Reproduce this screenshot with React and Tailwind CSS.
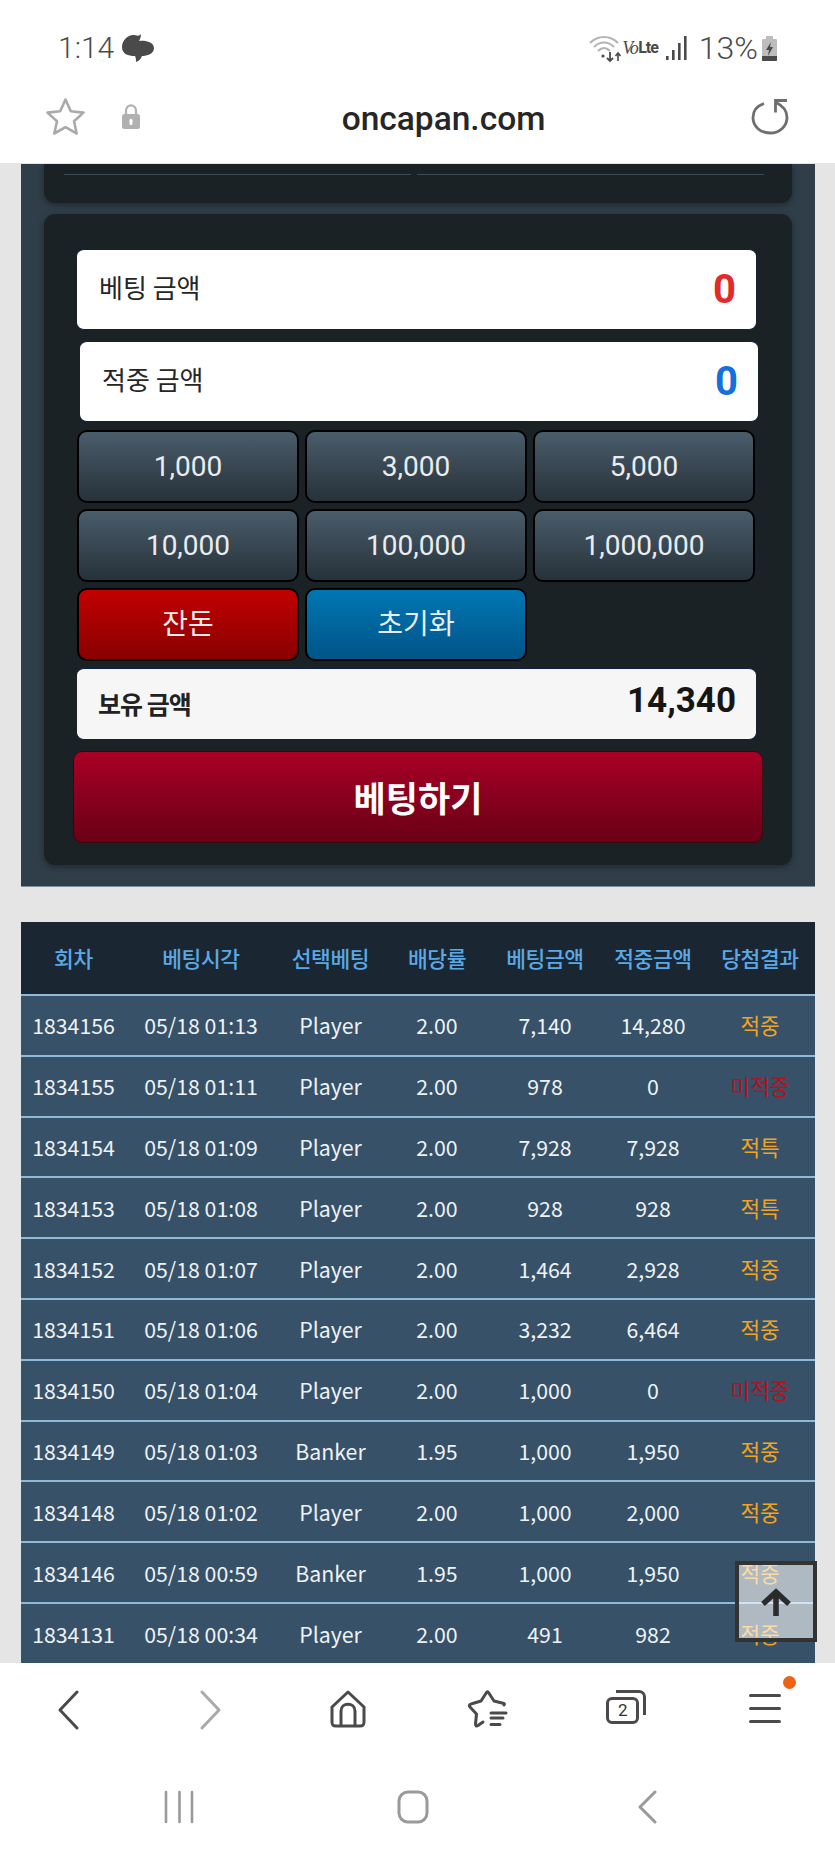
const rows = [
  ["1834156", "05/18 01:13", "Player", "2.00", "7,140", "14,280", "적중"],
  ["1834155", "05/18 01:11", "Player", "2.00", "978", "0", "미적중"],
  ["1834154", "05/18 01:09", "Player", "2.00", "7,928", "7,928", "적특"],
  ["1834153", "05/18 01:08", "Player", "2.00", "928", "928", "적특"],
  ["1834152", "05/18 01:07", "Player", "2.00", "1,464", "2,928", "적중"],
  ["1834151", "05/18 01:06", "Player", "2.00", "3,232", "6,464", "적중"],
  ["1834150", "05/18 01:04", "Player", "2.00", "1,000", "0", "미적중"],
  ["1834149", "05/18 01:03", "Banker", "1.95", "1,000", "1,950", "적중"],
  ["1834148", "05/18 01:02", "Player", "2.00", "1,000", "2,000", "적중"],
  ["1834146", "05/18 00:59", "Banker", "1.95", "1,000", "1,950", "적중"],
  ["1834131", "05/18 00:34", "Player", "2.00", "491", "982", "적중"],
];

const headers = ["회차", "베팅시각", "선택베팅", "배당률", "베팅금액", "적중금액", "당첨결과"];
const amounts = ["1,000", "3,000", "5,000", "10,000", "100,000", "1,000,000"];

const StatusBar = () => (
  <div className="h-[82px] flex items-start justify-between pt-[31px] pl-[58px] pr-[57px] font-['Roboto',sans-serif] font-light text-[#4a4a4a]">
    <div className="flex items-center gap-[8px]">
      <span className="text-[30px] leading-[34px]">1:14</span>
      <svg width="32" height="28" viewBox="0 0 32 28">
        <path d="M19 0 C19 3 18 5 17 7 C23 6 32 8 32 14 C32 20 25 22 20 22 C19 25 17 27 14 28 C14 26 14 24 13 22 C6 22 0 20 0 13 C0 6 6 1 11 1 C14 1 17 3 19 0 Z" fill="#4a4a4a" />
      </svg>
    </div>
    <div className="flex items-center">
      <svg width="32" height="30" viewBox="0 0 32 30" fill="none">
        <path d="M1 10 C9 2 21 2 29 10" stroke="#b4b4b4" strokeWidth="2.2" />
        <path d="M5 14 C11 8 19 8 25 14" stroke="#b4b4b4" strokeWidth="2.2" />
        <path d="M9 18 C13 14 17 14 21 18" stroke="#b4b4b4" strokeWidth="2.2" />
        <circle cx="14" cy="23" r="1.6" fill="#4a4a4a" />
        <path d="M21 19 V28 M18 25 L21 28 L24 25" stroke="#4a4a4a" strokeWidth="1.8" />
        <path d="M29 28 V20 M26.5 23 L29 20 L31.5 23" stroke="#4a4a4a" strokeWidth="1.6" />
      </svg>
      <span className="ml-[1px] text-[18px] leading-[30px] italic font-['Liberation_Serif',serif] tracking-[-1.5px]">Vo</span>
      <span className="ml-[1px] text-[16px] leading-[30px] font-bold font-['Roboto',sans-serif] tracking-[-1px]">Lte</span>
      <svg className="ml-[7px]" width="22" height="30" viewBox="0 0 22 30" fill="#4a4a4a">
        <rect x="1" y="23" width="2.6" height="4" />
        <rect x="7" y="17" width="2.6" height="10" />
        <rect x="13" y="10" width="2.6" height="17" />
        <rect x="19" y="3" width="2.6" height="24" />
      </svg>
      <span className="ml-[12px] text-[32px] leading-[34px]">13%</span>
      <svg className="ml-[3px]" width="17" height="30" viewBox="0 0 17 30">
        <path d="M5 3 H12 V6 H15 C16 6 16 7 16 8 V27 C16 28 15 28 14 28 H3 C2 28 1 28 1 27 V8 C1 7 1 6 2 6 H5 Z" fill="#bdbdbd" />
        <path d="M1 23 H16 V27 C16 28 15 28 14 28 H3 C2 28 1 28 1 27 Z" fill="#4a4a4a" />
        <path d="M10 9 L5 17 H8 L7 23 L12 14 H9 Z" fill="#4a4a4a" />
      </svg>
    </div>
  </div>
);

const AddressBar = () => (
  <div className="h-[81px] relative flex items-center justify-center">
    <div className="absolute left-[45px] top-[15px] flex items-center gap-[35px]">
      <svg width="41" height="39" viewBox="0 0 41 39" fill="none">
        <path d="M20.5 2.5 L25.8 14.3 L38.5 15.6 L29 24.2 L31.7 36.5 L20.5 30.2 L9.3 36.5 L12 24.2 L2.5 15.6 L15.2 14.3 Z" stroke="#aaaaaa" strokeWidth="2.6" strokeLinejoin="round" />
      </svg>
      <svg width="20" height="26" viewBox="0 0 20 26">
        <path d="M5 11 V7 C5 -0.5 15 -0.5 15 7 V11" fill="none" stroke="#b0b0b0" strokeWidth="2.2" />
        <rect x="1" y="10" width="18" height="15" rx="2.5" fill="#b0b0b0" />
        <rect x="8.5" y="15" width="3" height="6" rx="1.2" fill="#ffffff" />
      </svg>
    </div>
    <span className="ml-[52px] text-[33.5px] leading-[40px] font-medium text-[#262626] font-['Roboto',sans-serif] relative top-[-4px]">oncapan.com</span>
    <svg className="absolute left-[751px] top-[16px]" width="38" height="37" viewBox="0 0 38 37" fill="none">
      <path d="M13 5.5 C5.5 8 2 13 2 19.5 C2 28 9 35 19 35 C29 35 36 28 36 19.5 C36 13 32.5 8 25 4.5" stroke="#6f6f6f" strokeWidth="2.8" />
      <path d="M36 2.5 H24.5 V14.5" stroke="#6f6f6f" strokeWidth="2.8" />
    </svg>
  </div>
);

const AmountRow = ({ label, value, color, className }) => (
  <div className={`h-[81px] bg-white rounded-[7px] border-y border-[#10204a] flex items-center justify-between pl-[22px] pr-[20px] ${className}`}>
    <span className="text-[26px] text-[#262626] font-['Noto_Sans_CJK_KR',sans-serif] relative top-[-3px]">{label}</span>
    <span className={`text-[40px] leading-[48px] font-bold font-['Roboto',sans-serif] ${color}`}>{value}</span>
  </div>
);

const ChipButton = ({ children, className }) => (
  <button className={`h-[73px] rounded-[10px] border-2 border-black text-[28px] text-[#e9edf0] font-['Roboto','Noto_Sans_CJK_KR',sans-serif] ${className}`}>
    {children}
  </button>
);

const BetPanel = () => (
  <div className="mx-[21px] w-[794px] h-[723px] mt-px bg-[#2f3e49] border-b border-[#7b8e9e] px-[23px] overflow-hidden">
    <div className="h-[39px] bg-[#1b2226] rounded-b-[11px] shadow-[0_2px_6px_rgba(0,0,0,0.35)] flex gap-[6px] pl-[20px] pr-[28px] pt-[10px]">
      <div className="flex-1 h-px bg-[#3e4a52]" />
      <div className="flex-1 h-px bg-[#3e4a52]" />
    </div>
    <div className="h-[651px] mt-[11px] bg-[#1b2226] rounded-[11px] shadow-[0_2px_6px_rgba(0,0,0,0.35)] pt-[35px]">
      <AmountRow label="베팅 금액" value="0" color="text-[#e02b2b]" className="ml-[33px] w-[679px]" />
      <AmountRow label="적중 금액" value="0" color="text-[#1470dc]" className="ml-[36px] w-[678px] mt-[11px]" />
      <div className="ml-[33px] w-[678px] mt-[8px] grid grid-cols-3 gap-x-[6px] gap-y-[6px]">
        {amounts.map((a) => (
          <ChipButton key={a} className="bg-gradient-to-b from-[#4a5d6b] to-[#27323a]">{a}</ChipButton>
        ))}
        <ChipButton className="bg-gradient-to-b from-[#c20000] to-[#8a0000]">잔돈</ChipButton>
        <ChipButton className="bg-gradient-to-b from-[#0077b3] to-[#005488]">초기화</ChipButton>
      </div>
      <div className="ml-[33px] w-[679px] h-[72px] mt-[7px] bg-[#f6f6f6] rounded-[7px] border-y border-[#10204a] flex items-center justify-between pl-[21px] pr-[20px]">
        <span className="text-[25px] font-bold text-[#222] font-['Noto_Sans_CJK_KR',sans-serif] tracking-[-1px]">보유 금액</span>
        <span className="text-[35px] font-bold text-[#161616] font-['Roboto',sans-serif] relative top-[-3px]">14,340</span>
      </div>
      <button className="block ml-[29px] w-[690px] h-[92px] mt-[11px] rounded-[9px] border border-[#3a0410] bg-gradient-to-b from-[#a90026] to-[#6a0016] text-[35px] font-bold text-white font-['Noto_Sans_CJK_KR',sans-serif]">
        베팅하기
      </button>
    </div>
  </div>
);

const resultColor = (result) => (result === "미적중" ? "text-[#b1121f]" : "text-[#f2a420]");

const HistoryTable = () => (
  <table className="ml-[21px] mt-[35px] w-[794px] table-fixed border-collapse font-['Noto_Sans_CJK_KR',sans-serif]">
    <colgroup>
      <col className="w-[105px]" />
      <col className="w-[150px]" />
      <col className="w-[109px]" />
      <col className="w-[104px]" />
      <col className="w-[112px]" />
      <col className="w-[104px]" />
      <col className="w-[110px]" />
    </colgroup>
    <thead>
      <tr className="h-[73px] bg-[#1a2631]">
        {headers.map((h) => (
          <th key={h} className="p-0 text-[21.5px] font-medium text-[#5aa9e6] tracking-[-0.4px]">{h}</th>
        ))}
      </tr>
    </thead>
    <tbody>
      {rows.map((row) => (
        <tr key={row[0]} className="h-[60.8px] bg-[#365168] border-t-[2px] border-[#8dbadb]">
          {row.map((cell, i) => (
            <td
              key={i}
              className={`p-0 text-center text-[21.3px] ${i === 6 ? resultColor(cell) : "text-[#eef2f5]"}`}
            >
              {cell}
            </td>
          ))}
        </tr>
      ))}
    </tbody>
  </table>
);

const BottomNav = () => (
  <div className="h-[104px] grid grid-cols-6 items-start pt-[27px]">
    <div className="flex justify-center pr-[4px]">
      <svg width="22" height="40" viewBox="0 0 22 40" fill="none">
        <path d="M20 2 L3 20 L20 38" stroke="#4a4a4a" strokeWidth="3" strokeLinecap="round" strokeLinejoin="round" />
      </svg>
    </div>
    <div className="flex justify-center pl-[4px]">
      <svg width="22" height="40" viewBox="0 0 22 40" fill="none">
        <path d="M2 2 L19 20 L2 38" stroke="#aaaaaa" strokeWidth="3" strokeLinecap="round" strokeLinejoin="round" />
      </svg>
    </div>
    <div className="flex justify-center">
      <svg width="36" height="38" viewBox="0 0 36 38" fill="none" stroke="#4a4a4a" strokeWidth="3" strokeLinejoin="round">
        <path d="M18 2 L34 17 V32 C34 35 33 36 30 36 H6 C3 36 2 35 2 32 V17 Z" />
        <path d="M11 36 V21 C11 12 25 12 25 21 V36" />
      </svg>
    </div>
    <div className="flex justify-center">
      <svg width="41" height="38" viewBox="0 0 41 38" fill="none" stroke="#4a4a4a" strokeWidth="3" strokeLinecap="round" strokeLinejoin="round">
        <path d="M37 15 C38 14 37 13 35 13 L27 11 L21.5 2.5 C21 1.5 20 1.5 19.5 2.5 L14 11 L4 14 C2 14.5 2 16 3 17 L9.5 24 L8.5 34 C8.5 36 9.5 36.5 11 35.5 L16 32" />
        <path d="M24 23 H39 M24 28 H36 M24 34.5 H33" />
      </svg>
    </div>
    <div className="flex justify-center">
      <div className="relative w-[40px] h-[34px]">
        <div className="absolute left-[10px] top-0 w-[30px] h-[25px] border-t-[3px] border-r-[3px] border-[#4a4a4a] rounded-tr-[7px]" />
        <div className="absolute left-0 top-[7px] w-[33px] h-[27px] border-[3px] border-[#4a4a4a] rounded-[6px] bg-white flex items-center justify-center text-[17px] leading-none text-[#333] font-['Roboto',sans-serif]">
          2
        </div>
      </div>
    </div>
    <div className="flex justify-center">
      <div className="relative w-[32px] pt-[4px] flex flex-col gap-[10px]">
        <div className="h-[3px] bg-[#4a4a4a] rounded-full" />
        <div className="h-[3px] bg-[#4a4a4a] rounded-full" />
        <div className="h-[3px] bg-[#4a4a4a] rounded-full" />
        <div className="absolute left-[34px] top-[-14px] w-[13px] h-[13px] rounded-full bg-[#ee6213]" />
      </div>
    </div>
  </div>
);

const SystemNav = () => (
  <div className="h-[89px] flex pt-[23px] pl-[164px]">
    <svg width="31" height="34" viewBox="0 0 31 34" fill="none" stroke="#9a9a9a" strokeWidth="2.6" strokeLinecap="round">
      <path d="M2 2 V32 M15.5 2 V32 M28 2 V32" />
    </svg>
    <svg className="ml-[202px]" width="32" height="34" viewBox="0 0 32 34" fill="none" stroke="#9a9a9a" strokeWidth="3">
      <rect x="2" y="2" width="28" height="30" rx="9" />
    </svg>
    <svg className="ml-[208px]" width="20" height="34" viewBox="0 0 20 34" fill="none" stroke="#9a9a9a" strokeWidth="3" strokeLinecap="round" strokeLinejoin="round">
      <path d="M18 2 L3 17 L18 32" />
    </svg>
  </div>
);

const App = () => {
  return (
    <div className="w-[835px] h-[1856px] bg-white overflow-hidden flex flex-col">
      <StatusBar />
      <AddressBar />
      <div className="relative h-[1500px] bg-[#e5e5e5] overflow-hidden">
        <BetPanel />
        <HistoryTable />
        <button className="absolute left-[735px] top-[1398px] w-[82px] h-[81px] border-[4px] border-[#333333] bg-[#ffffff]/60 flex items-center justify-center">
          <svg width="32" height="28" viewBox="0 0 32 28" fill="none" stroke="#2b2b2b" strokeWidth="5.5" strokeLinejoin="miter">
            <path d="M16 28 V5 M3 16 L16 4 L29 16" />
          </svg>
        </button>
      </div>
      <BottomNav />
      <SystemNav />
    </div>
  );
};

export default App;
